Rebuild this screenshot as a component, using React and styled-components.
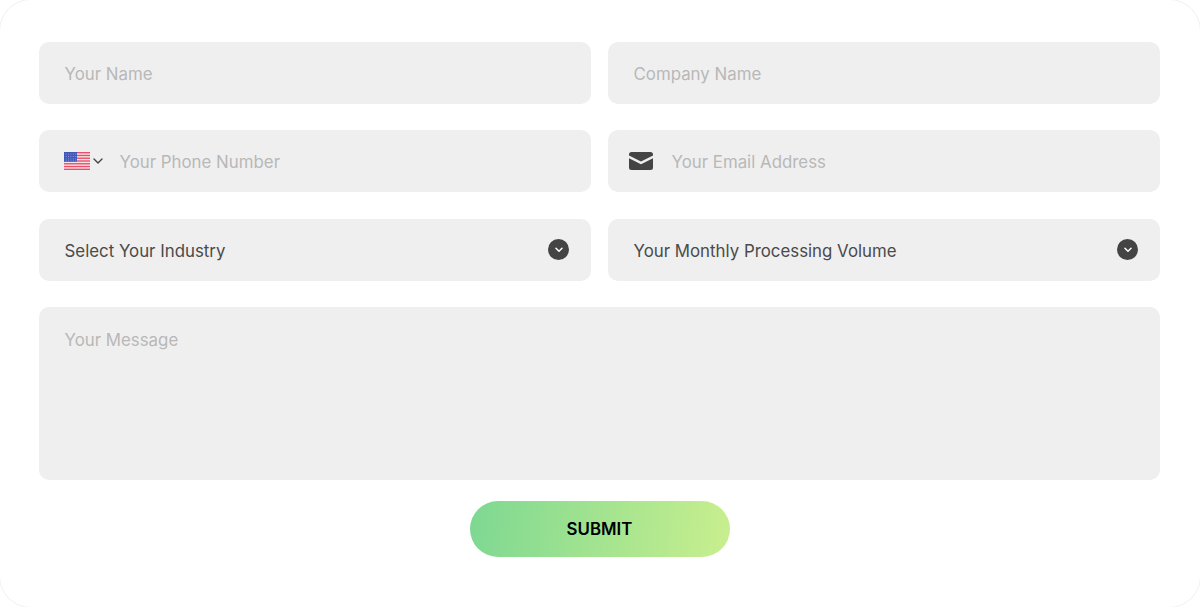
import React from "react";
import styled, { createGlobalStyle } from "styled-components";

const GlobalStyle = createGlobalStyle`
  html, body {
    margin: 0;
    padding: 0;
    background: #fff;
    overflow: hidden;
  }
  * {
    box-sizing: border-box;
  }
`;

const FlagIcon = () => {
  const stripes = [0, 2, 4, 6, 8, 10, 12];
  return (
    <svg width="26" height="18" viewBox="0 0 26 18">
      <rect width="26" height="18" fill="#f8e4e8" />
      {stripes.map((i) => (
        <rect key={i} y={i * 1.385} width="26" height="1.385" fill="#e8506a" />
      ))}
      <rect width="13" height="9.7" fill="#3f58b8" />
      <g fill="#8d9ce0">
        {[1.6, 4, 6.4, 8.8, 11.2].map((x) =>
          [1.6, 4, 6.4, 8.4].map((y) => <rect key={`${x}-${y}`} x={x} y={y} width="1" height="1" />)
        )}
      </g>
    </svg>
  );
};

const Chevron = () => (
  <svg width="10" height="6" viewBox="0 0 10 6" fill="none">
    <path d="M1 1l4 4 4-4" stroke="#444" strokeWidth="1.4" strokeLinecap="round" strokeLinejoin="round" />
  </svg>
);

const MailIcon = () => (
  <svg width="24" height="18" viewBox="0 0 24 18">
    <path
      d="M2.5 0h19A2.5 2.5 0 0 1 24 2.5v.9l-12 6-12-6v-.9A2.5 2.5 0 0 1 2.5 0zM0 6.2l12 6 12-6v9.3a2.5 2.5 0 0 1-2.5 2.5h-19A2.5 2.5 0 0 1 0 15.5z"
      fill="#444"
    />
  </svg>
);

const SelectArrow = () => (
  <ArrowCircle>
    <svg width="8" height="6" viewBox="0 0 8 6" fill="none">
      <path d="M1 1.2l3 3 3-3" stroke="#fff" strokeWidth="1.5" strokeLinecap="round" strokeLinejoin="round" />
    </svg>
  </ArrowCircle>
);

const App = () => {
  return (
    <>
      <GlobalStyle />
      <Card>
        <Form>
          <Field>
            <Placeholder>Your Name</Placeholder>
          </Field>
          <Field>
            <Placeholder>Company Name</Placeholder>
          </Field>
          <Field $inset="25px">
            <FlagPicker>
              <FlagIcon />
              <Chevron />
            </FlagPicker>
            <Placeholder>Your Phone Number</Placeholder>
          </Field>
          <Field $inset="21px">
            <MailSlot>
              <MailIcon />
            </MailSlot>
            <Placeholder>Your Email Address</Placeholder>
          </Field>
          <SelectField>
            <Value>Select Your Industry</Value>
            <SelectArrow />
          </SelectField>
          <SelectField>
            <Value>Your Monthly Processing Volume</Value>
            <SelectArrow />
          </SelectField>
          <MessageField>
            <Placeholder>Your Message</Placeholder>
          </MessageField>
        </Form>
        <Actions>
          <SubmitButton type="button">SUBMIT</SubmitButton>
        </Actions>
      </Card>
    </>
  );
};

const Card = styled.div`
  width: 1202px;
  height: 609px;
  margin: -1px;
  padding: 41.5px 39px 0;
  background: #fff;
  border: 1px solid #f1f1f1;
  border-radius: 32px;
  font-family: Inter, "Liberation Sans", sans-serif;
`;

const Form = styled.div`
  display: grid;
  grid-template-columns: 552px 552px;
  column-gap: 17px;
  row-gap: 26.5px;
`;

const Field = styled.div`
  display: flex;
  align-items: center;
  height: 62px;
  padding: 0 26px 0 ${({ $inset }) => $inset || "25.5px"};
  background: #efefef;
  border-radius: 10px;
`;

const SelectField = styled(Field)`
  justify-content: space-between;
  padding-right: 22px;
`;

const MessageField = styled(Field)`
  grid-column: 1 / -1;
  align-items: flex-start;
  height: 173px;
  padding-top: 19.5px;
`;

const Placeholder = styled.span`
  padding-top: 3px;
  font-size: 16.85px;
  line-height: 21px;
  color: #b8b8b8;
`;

const Value = styled(Placeholder)`
  color: #4a4a4a;
`;

const FlagPicker = styled.div`
  display: flex;
  align-items: center;
  gap: 3px;
  width: 55.5px;
  padding-bottom: 1px;
`;

const MailSlot = styled.div`
  display: flex;
  align-items: center;
  width: 42.5px;
  padding-bottom: 1px;
`;

const ArrowCircle = styled.span`
  display: flex;
  align-items: center;
  justify-content: center;
  width: 21px;
  height: 21px;
  border-radius: 50%;
  background: #444444;
`;

const Actions = styled.div`
  display: flex;
  justify-content: center;
  margin-top: 21px;
  padding-right: 1px;
`;

const SubmitButton = styled.button`
  width: 260px;
  height: 56px;
  border: 0;
  border-radius: 28px;
  background: linear-gradient(97deg, #7dd892 0%, #c9ef8e 100%);
  font-family: inherit;
  font-size: 16.85px;
  font-weight: 600;
  color: #000;
`;

export default App;
